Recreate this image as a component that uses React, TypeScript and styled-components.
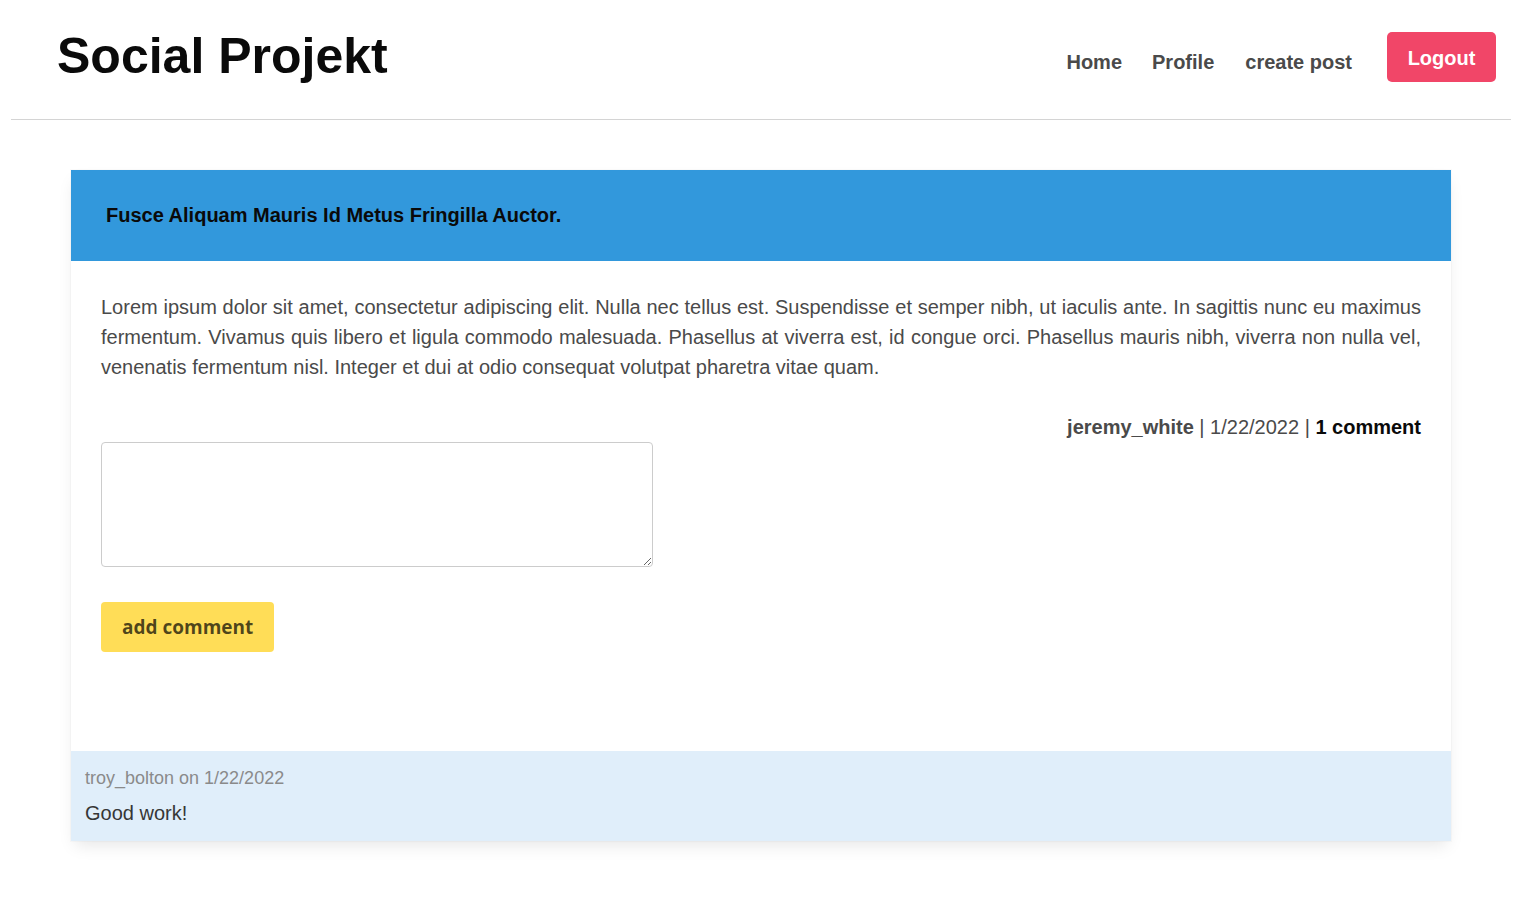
import React from "react";
import styled, { createGlobalStyle } from "styled-components";

const Global = createGlobalStyle`
  html, body { margin: 0; padding: 0; background: #fff; }
  body { font-family: "Liberation Sans", Arial, sans-serif; color: #4a4a4a; }
  * { box-sizing: border-box; }
`;

const Header = styled.header`
  width: 1500px;
  margin: 0 14px 0 11px;
  height: 120px;
  border-bottom: 1px solid #d4d4d4;
  display: flex;
  align-items: center;
  justify-content: space-between;
  padding: 0 15px 3px 46px;
`;

const Brand = styled.h1`
  margin: 0;
  font-size: 50px;
  line-height: 1;
  font-weight: 700;
  color: #0a0a0a;
  padding-bottom: 4px;
`;

const Nav = styled.nav`
  display: flex;
  align-items: center;
`;

const NavLink = styled.a`
  font-size: 20px;
  font-weight: 700;
  color: #4a4a4a;
  text-decoration: none;
  margin-right: 31px;
  padding-top: 9px;
  &:first-of-type { margin-right: 30px; }
  &:last-of-type { margin-right: 35px; }
`;

const LogoutButton = styled.button`
  height: 50px;
  width: 109px;
  padding: 2px 0 0;
  border: none;
  border-radius: 5px;
  background: #f14668;
  color: #fff;
  font-family: "Liberation Sans", Arial, sans-serif;
  font-size: 20px;
  font-weight: 700;
  margin-top: -2px;
`;

const Main = styled.main`
  width: 1500px;
  margin: 0 14px 0 11px;
  padding: 50px 60px;
`;

const Card = styled.article`
  background: #fff;
  box-shadow: 0 8px 16px -4px rgba(10, 10, 10, 0.1), 0 0 0 1px rgba(10, 10, 10, 0.02);
`;

const CardHeader = styled.div`
  background: #3298dc;
  height: 91px;
  display: flex;
  align-items: center;
  padding: 0 35px;
`;

const CardTitle = styled.h2`
  margin: 0;
  font-size: 20px;
  font-weight: 700;
  color: #0a0a0a;
`;

const CardBody = styled.div`
  padding: 31px 30px 99px;
`;

const Content = styled.p`
  margin: 0;
  font-size: 20px;
  line-height: 30px;
  text-align: justify;
  color: #4a4a4a;
`;

const Meta = styled.div`
  margin-top: 30px;
  text-align: right;
  font-size: 20px;
  line-height: 30px;
  color: #4a4a4a;
`;

const Author = styled.strong`
  color: #4a4a4a;
`;

const CommentCount = styled.strong`
  color: #0a0a0a;
`;

const CommentInput = styled.textarea`
  display: block;
  width: 552px;
  height: 125px;
  border: 1px solid #cccccc;
  border-radius: 4px;
  resize: vertical;
  font-family: "Liberation Sans", Arial, sans-serif;
  font-size: 16px;
  padding: 8px;
  margin: 0;
`;

const AddButton = styled.button`
  margin-top: 35px;
  height: 50px;
  padding: 0 21px;
  border: none;
  border-radius: 4px;
  background: #ffdd57;
  color: rgba(0, 0, 0, 0.7);
  font-family: "Open Sans", "Noto Sans", sans-serif;
  font-size: 19px;
  font-weight: 700;
`;

const CommentBox = styled.div`
  background: #e0eefa;
  padding: 14px;
  height: 90px;
`;

const CommentMeta = styled.div`
  font-size: 18px;
  line-height: 26px;
  color: #8a8a8a;
`;

const CommentText = styled.div`
  margin-top: 9px;
  font-size: 20px;
  line-height: 26px;
  color: #363636;
`;

export default function App() {
  return (
    <>
      <Global />
      <Header>
        <Brand>Social Projekt</Brand>
        <Nav>
          <NavLink href="#">Home</NavLink>
          <NavLink href="#">Profile</NavLink>
          <NavLink href="#">create post</NavLink>
          <LogoutButton>Logout</LogoutButton>
        </Nav>
      </Header>
      <Main>
        <Card>
          <CardHeader>
            <CardTitle>Fusce Aliquam Mauris Id Metus Fringilla Auctor.</CardTitle>
          </CardHeader>
          <CardBody>
            <Content>
              Lorem ipsum dolor sit amet, consectetur adipiscing elit. Nulla nec tellus est. Suspendisse et semper nibh, ut iaculis ante. In sagittis nunc eu maximus fermentum. Vivamus quis libero et ligula commodo malesuada. Phasellus at viverra est, id congue orci. Phasellus mauris nibh, viverra non nulla vel, venenatis fermentum nisl. Integer et dui at odio consequat volutpat pharetra vitae quam.
            </Content>
            <Meta>
              <Author>jeremy_white</Author> | 1/22/2022 | <CommentCount>1 comment</CommentCount>
            </Meta>
            <CommentInput />
            <AddButton>add comment</AddButton>
          </CardBody>
          <CommentBox>
            <CommentMeta>troy_bolton on 1/22/2022</CommentMeta>
            <CommentText>Good work!</CommentText>
          </CommentBox>
        </Card>
      </Main>
    </>
  );
}
